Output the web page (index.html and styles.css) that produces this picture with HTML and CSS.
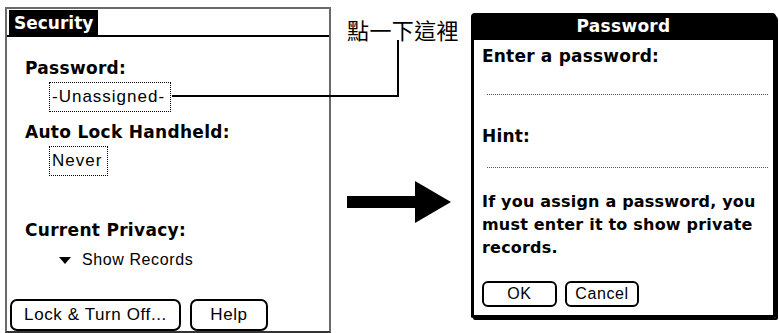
FILE: index.html
```html
<!DOCTYPE html>
<html>
  <head>
    <meta charset="UTF-8" />
    <title>Security</title>
    <link rel="stylesheet" href="styles.css">
  </head>
  <body>
    <div class="page">
      <div class="screen">
        <div class="screen-head">
          <span class="tab">Security</span>
        </div>
        <div class="screen-body">
          <div class="label first">Password:</div>
          <div class="field">-Unassigned-</div>
          <div class="label">Auto Lock Handheld:</div>
          <div class="field">Never</div>
          <div class="label privacy">Current Privacy:</div>
          <div class="picker"><span class="tri"></span>Show Records</div>
        </div>
        <div class="screen-buttons">
          <span class="btn btn-lock">Lock &amp; Turn Off...</span>
          <span class="btn btn-help">Help</span>
        </div>
      </div>

      <div class="middle">
        <div class="callout">點一下這裡</div>
        <svg class="arrow" width="104" height="42" viewBox="0 0 104 42">
          <rect x="0" y="15" width="70" height="12" fill="#000" />
          <polygon points="68,0 104,21 68,42" fill="#000" />
        </svg>
      </div>

      <div class="dialog">
        <div class="dialog-title">Password</div>
        <div class="dialog-body">
          <div class="dlabel">Enter a password:</div>
          <div class="dline"></div>
          <div class="dlabel hint">Hint:</div>
          <div class="dline second"></div>
          <p class="dnote">If you assign a password, you must enter it to show private records.</p>
          <div class="dialog-buttons">
            <span class="btn dbtn">OK</span>
            <span class="btn dbtn">Cancel</span>
          </div>
        </div>
      </div>

      <!-- leader line from the field to the callout -->
      <svg class="leader" width="779" height="333">
        <polyline points="172,96 398,96 398,40" fill="none" stroke="#000" stroke-width="2" />
      </svg>
    </div>
  </body>
</html>
```

FILE: styles.css
```css
html,
body {
  margin: 0;
  padding: 0;
  background: #fff;
}
.page {
  position: relative;
  width: 779px;
  height: 333px;
  display: flex;
  align-items: flex-start;
  font-family: "DejaVu Sans", sans-serif;
  color: #000;
  overflow: hidden;
}
.screen {
  margin-left: 5px;
  margin-top: 7px;
  width: 322px;
  height: 322px;
  border: 2px solid #6a6a6a;
  border-bottom-color: #333;
  display: flex;
  flex-direction: column;
}
.screen-head {
  height: 26px;
  border-bottom: 2px solid #000;
  display: flex;
  align-items: flex-end;
}
.tab {
  margin-left: 2px;
  background: #000;
  color: #fff;
  font-weight: bold;
  font-size: 17px;
  height: 25px;
  line-height: 26px;
  padding: 0 5px;
}
.screen-body {
  flex: 1;
  padding-left: 18px;
}
.label {
  font-weight: bold;
  font-size: 17px;
  line-height: 20px;
  letter-spacing: 0.3px;
}
.label.first {
  margin-top: 21px;
}
.field {
  width: fit-content;
  margin-left: 24px;
  margin-top: 4px;
  margin-bottom: 10px;
  border: 1px dotted #000;
  padding: 0 5px 0 2px;
  font-size: 17px;
  line-height: 28px;
  font-family: "Liberation Sans", sans-serif;
  letter-spacing: 1px;
}
.privacy {
  margin-top: 44px;
}
.picker {
  margin-top: 10px;
  margin-left: 34px;
  font-family: "Liberation Sans", sans-serif;
  font-size: 16px;
  line-height: 20px;
  letter-spacing: 0.6px;
  display: flex;
  align-items: center;
}
.tri {
  width: 0;
  height: 0;
  border-left: 6px solid transparent;
  border-right: 6px solid transparent;
  border-top: 7px solid #000;
  margin-right: 11px;
}
.screen-buttons {
  display: flex;
  gap: 9px;
  padding-left: 3px;
}
.btn {
  display: inline-block;
  border: 2px solid #000;
  border-radius: 7px;
  text-align: center;
  font-family: "Liberation Sans", sans-serif;
  font-size: 17px;
  letter-spacing: 0.6px;
}
.btn-lock {
  width: 167px;
  height: 28px;
  line-height: 28px;
}
.btn-help {
  width: 74px;
  height: 28px;
  line-height: 28px;
}
.middle {
  width: 140px;
  height: 333px;
  display: flex;
  flex-direction: column;
  padding-left: 16px;
  box-sizing: border-box;
}
.callout {
  margin-top: 16px;
  font-family: "Noto Sans CJK TC", sans-serif;
  font-size: 22px;
  line-height: 26px;
  letter-spacing: 0.4px;
}
.arrow {
  margin-top: 139px;
}
.dialog {
  margin-top: 13px;
  width: 299px;
  height: 302px;
  border: 3px solid #000;
  border-top: 0;
  border-radius: 5px 5px 2px 2px;
  box-shadow: 2px 2px 0 #000;
  display: flex;
  flex-direction: column;
}
.dialog-title {
  background: #000;
  color: #fff;
  text-align: center;
  font-weight: bold;
  font-size: 17px;
  height: 27px;
  line-height: 27px;
  letter-spacing: 0.3px;
  border-radius: 4px 4px 0 0;
  margin: 0 -3px;
}
.dialog-body {
  padding: 0 5px 0 8px;
}
.dlabel {
  font-weight: bold;
  font-size: 17px;
  line-height: 20px;
  margin-top: 6px;
  letter-spacing: 0.2px;
}
.dlabel.hint {
  margin-top: 31px;
}
.dline {
  margin-top: 28px;
  margin-left: 5px;
  border-top: 1px dotted #555;
}
.dline.second {
  margin-top: 21px;
}
.dnote {
  margin: 22px 0 0;
  font-weight: bold;
  font-size: 16px;
  line-height: 23px;
  letter-spacing: 0.2px;
}
.dialog-buttons {
  margin-top: 22px;
  display: flex;
  gap: 8px;
}
.dbtn {
  height: 22px;
  line-height: 22px;
  font-size: 16px;
  border-radius: 6px;
}
.dbtn:first-child {
  width: 71px;
}
.dbtn:last-child {
  width: 70px;
}
.leader {
  position: absolute;
  left: 0;
  top: 0;
  pointer-events: none;
}
```
